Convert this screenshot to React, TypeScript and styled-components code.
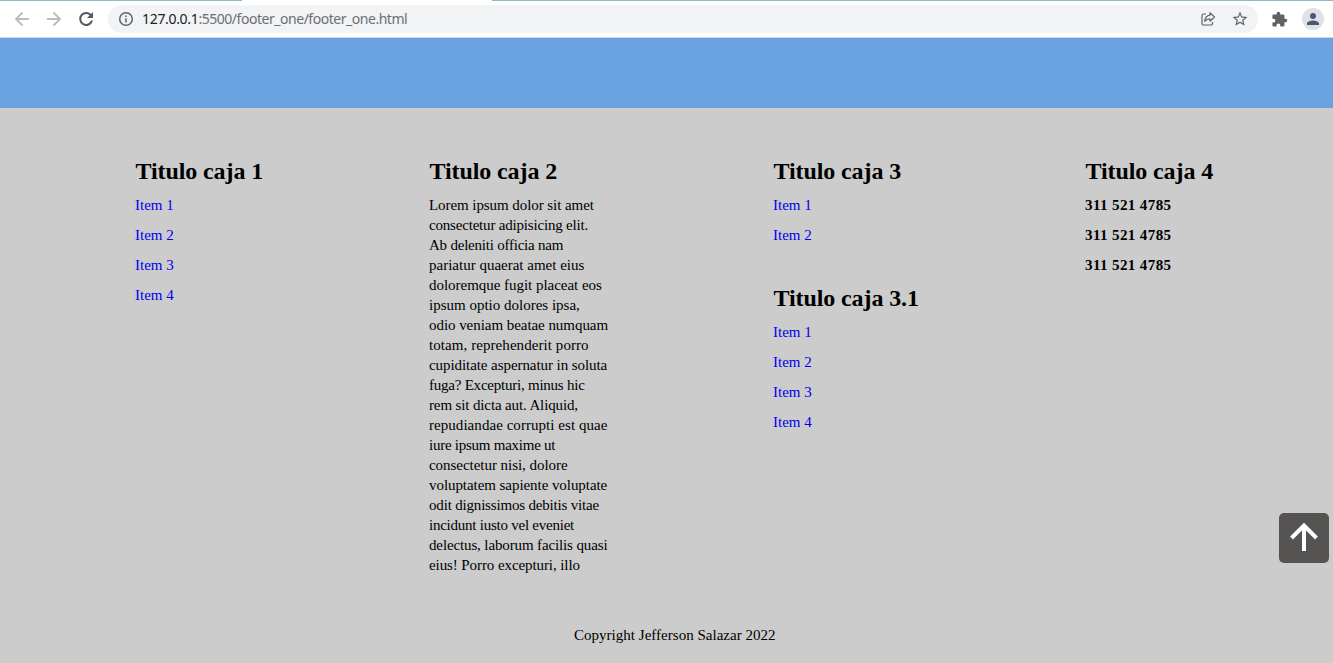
import React from "react";
import styled, { createGlobalStyle } from "styled-components";

const GlobalStyle = createGlobalStyle`
  * { box-sizing: border-box; }
  body { margin: 0; background: #ccc; overflow: hidden; }
  h2, p, ul { margin: 0; padding: 0; }
`;

const Page = styled.div`
  display: flex;
  flex-direction: column;
  width: 1333px;
  height: 663px;
  background: #cccccc;
  color: #000;
  font: 15px/20px "Liberation Serif", "Times New Roman", serif;
`;

const TabEdge = styled.div`
  display: flex;
  justify-content: space-between;
  height: 1px;
  background: #fff;
`;

const TabGap = styled.div<{ $width: number }>`
  width: ${(p) => p.$width}px;
  background: #8fb9c6;
`;

const Toolbar = styled.header`
  display: flex;
  align-items: center;
  height: 37px;
  padding: 0 9px 0 13px;
  background: #fff;
  border-bottom: 1px solid #d5d9de;
`;

const NavButton = styled.span<{ $color: string }>`
  display: flex;
  width: 18px;
  height: 18px;
  margin-right: 14px;
  color: ${(p) => p.$color};
`;

const AddressBar = styled.div`
  display: flex;
  align-items: center;
  width: 1150px;
  height: 28px;
  margin-left: -1px;
  padding: 0 9px 0 10px;
  border-radius: 14px;
  background: #f1f3f4;
  color: #5f6368;
`;

const Url = styled.span`
  flex: 1;
  margin-left: 8px;
  font: 14px/20px "Noto Sans", "Open Sans", sans-serif;
  letter-spacing: -0.47px;
  color: #6b6f74;
`;

const Host = styled.span`
  letter-spacing: -0.32px;
  color: #202124;
`;

const BarIcon = styled.span<{ $gap: number }>`
  display: flex;
  margin-left: ${(p) => p.$gap}px;
  color: #5f6368;
`;

const Avatar = styled.span`
  display: flex;
  align-items: center;
  justify-content: center;
  width: 22px;
  height: 22px;
  margin-left: auto;
  border-radius: 50%;
  background: #dee1e6;
  color: #4c5871;
`;

const Banner = styled.div`
  height: 70px;
  background: #6aa1e1;
`;

const Footer = styled.footer`
  display: flex;
  flex-direction: column;
  flex: 1;
  padding-top: 50px;
`;

const Columns = styled.div`
  display: grid;
  grid-template-columns: 294px 344px 312px 200px;
  height: 467px;
  padding-left: 135px;
`;

const Column = styled.div`
  display: flex;
  flex-direction: column;
  gap: 30px;
`;

const Title = styled.h2`
  height: 37px;
  padding-left: 0.5px;
  font-size: 24px;
  line-height: 27px;
  font-weight: 700;
  letter-spacing: -0.1px;
  white-space: nowrap;
`;

const Links = styled.ul`
  list-style: none;
`;

const Item = styled.li`
  height: 30px;
`;

const Link = styled.a`
  color: #0000ee;
  text-decoration: none;
`;

const Phone = styled.b`
  letter-spacing: 0.4px;
`;

const Line = styled.span<{ $tracking: number }>`
  display: block;
  white-space: nowrap;
  letter-spacing: ${(p) => p.$tracking}px;
`;

const Copyright = styled.p`
  padding-left: 574px;
  letter-spacing: 0.02px;
`;

const ToTop = styled.button`
  position: fixed;
  right: 4px;
  bottom: 100px;
  display: flex;
  align-items: center;
  justify-content: center;
  width: 50px;
  height: 50px;
  padding: 0 0 2px;
  border: 0;
  border-radius: 5px;
  background: #555453;
  color: #fff;
`;

const lorem: [string, number][] = [
  ["Lorem ipsum dolor sit amet", -0.07],
  ["consectetur adipisicing elit.", -0.19],
  ["Ab deleniti officia nam", -0.22],
  ["pariatur quaerat amet eius", 0],
  ["doloremque fugit placeat eos", -0.03],
  ["ipsum optio dolores ipsa,", 0],
  ["odio veniam beatae numquam", -0.05],
  ["totam, reprehenderit porro", 0.07],
  ["cupiditate aspernatur in soluta", -0.07],
  ["fuga? Excepturi, minus hic", -0.23],
  ["rem sit dicta aut. Aliquid,", -0.13],
  ["repudiandae corrupti est quae", 0.05],
  ["iure ipsum maxime ut", -0.25],
  ["consectetur nisi, dolore", -0.04],
  ["voluptatem sapiente voluptate", -0.06],
  ["odit dignissimos debitis vitae", -0.18],
  ["incidunt iusto vel eveniet", -0.24],
  ["delectus, laborum facilis quasi", -0.13],
  ["eius! Porro excepturi, illo", -0.09],
];

const LinkBox = ({ title, count }: { title: string; count: number }) => (
  <section>
    <Title>{title}</Title>
    <Links>
      {Array.from({ length: count }, (_, i) => (
        <Item key={i}>
          <Link href="#">Item {i + 1}</Link>
        </Item>
      ))}
    </Links>
  </section>
);

const Glyph = ({ d, size }: { d: string; size: number }) => (
  <svg width={size} height={size} viewBox="0 0 24 24" fill="currentColor">
    <path d={d} />
  </svg>
);

const NavArrow = ({ d }: { d: string }) => (
  <svg width="18" height="18" viewBox="0 0 18 18" fill="none" stroke="currentColor" strokeWidth="1.8">
    <path d={d} />
  </svg>
);

export default function App() {
  return (
    <Page>
      <GlobalStyle />
      <TabEdge>
        <TabGap $width={242} />
        <TabGap $width={841} />
      </TabEdge>
      <Toolbar>
        <NavButton $color="#babcbe">
          <NavArrow d="M16 9H3.500M9.500 2.500 3 9l6.500 6.500" />
        </NavButton>
        <NavButton $color="#babcbe">
          <NavArrow d="M2 9h12.500M8.500 2.500 15 9l-6.500 6.500" />
        </NavButton>
        <NavButton $color="#55595e">
          <svg width="18" height="18" viewBox="0 0 18 18">
            <path d="M14.3 5.8A6 6 0 1 0 15 10.5" fill="none" stroke="currentColor" strokeWidth="2" />
            <path d="M16 2v6h-6z" fill="currentColor" />
          </svg>
        </NavButton>
        <AddressBar>
          <svg width="16" height="16" viewBox="0 0 16 16" fill="none" stroke="currentColor" strokeWidth="1.5">
            <circle cx="8" cy="8" r="6.3" />
            <path d="M8 7.2v4.2M8 4.4v1.6" />
          </svg>
          <Url>
            <Host>127.0.0.1</Host>:5500/footer_one/footer_one.html
          </Url>
          <BarIcon $gap={0}>
            <svg width="16" height="16" viewBox="0 0 16 16" fill="none" stroke="currentColor" strokeWidth="1.2" strokeLinejoin="round">
              <path d="M6 3H3.5A1.5 1.5 0 0 0 2 4.5v8A1.5 1.5 0 0 0 3.5 14H11a1.5 1.5 0 0 0 1.500-1.500V11" />
              <path d="M10 1.800 14.500 6 10 10.200V7.800C7.500 7.800 6 8.500 4.700 10.300 5 7 7 4.600 10 4.200z" />
            </svg>
          </BarIcon>
          <BarIcon $gap={15}>
            <Glyph size={18} d="M22 9.240l-7.190-.620L12 2 9.190 8.630 2 9.240l5.460 4.730L5.820 21 12 17.270 18.180 21l-1.630-7.030L22 9.240zM12 15.400l-3.760 2.270 1-4.280-3.320-2.880 4.380-.380L12 6.100l1.710 4.040 4.380.380-3.320 2.880 1 4.280L12 15.400z" />
          </BarIcon>
        </AddressBar>
        <BarIcon $gap={13}>
          <Glyph size={17} d="M20.500 11H19V7c0-1.100-.900-2-2-2h-4V3.500a2.500 2.500 0 0 0-5 0V5H4c-1.100 0-2 .900-2 2v3.800h1.500a2.700 2.700 0 0 1 0 5.400H2V20c0 1.100.900 2 2 2h3.800v-1.500a2.700 2.700 0 0 1 5.400 0V22H17c1.100 0 2-.900 2-2v-4h1.500a2.500 2.500 0 0 0 0-5z" />
        </BarIcon>
        <Avatar>
          <Glyph size={18} d="M12 12a4 4 0 1 0 0-8 4 4 0 0 0 0 8zm0 2c-2.670 0-8 1.340-8 4v2h16v-2c0-2.660-5.330-4-8-4z" />
        </Avatar>
      </Toolbar>
      <Banner />
      <Footer>
        <Columns>
          <Column>
            <LinkBox title="Titulo caja 1" count={4} />
          </Column>
          <Column>
            <section>
              <Title>Titulo caja 2</Title>
              <p>
                {lorem.map(([text, tracking]) => (
                  <Line key={text} $tracking={tracking}>{text}</Line>
                ))}
              </p>
            </section>
          </Column>
          <Column>
            <LinkBox title="Titulo caja 3" count={2} />
            <LinkBox title="Titulo caja 3.1" count={4} />
          </Column>
          <Column>
            <section>
              <Title>Titulo caja 4</Title>
              <Links>
                {[0, 1, 2].map((i) => (
                  <Item key={i}>
                    <Phone>311 521 4785</Phone>
                  </Item>
                ))}
              </Links>
            </section>
          </Column>
        </Columns>
        <Copyright>Copyright Jefferson Salazar 2022</Copyright>
      </Footer>
      <ToTop aria-label="Subir">
        <svg width="28" height="30" viewBox="0 0 28 30" fill="none" stroke="currentColor" strokeWidth="4">
          <path d="M14 29V4M1.500 16 14 3.500 26.500 16" />
        </svg>
      </ToTop>
    </Page>
  );
}
